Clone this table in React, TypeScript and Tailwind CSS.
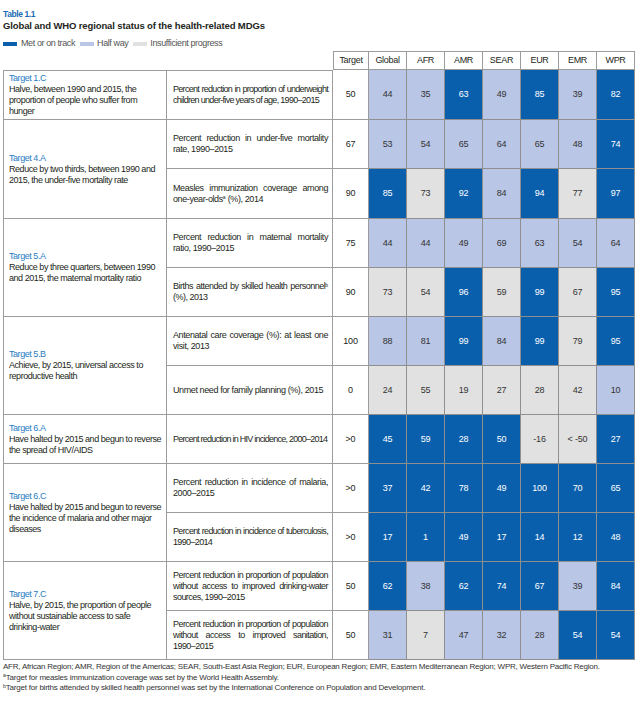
import React from 'react';

type Tone = 'D' | 'L' | 'G';

type Row = { lines: React.ReactNode[]; track: string; target: string; values: [string, Tone][] };
type Group = { code: string; lines: string[]; rows: Row[] };

const sup = (s: string) => <sup className="text-[5px] tracking-normal">{s}</sup>;

const groups: Group[] = [
  {
    code: 'Target 1.C',
    lines: ['Halve, between 1990 and 2015, the', 'proportion of people who suffer from', 'hunger'],
    rows: [
      {
        lines: ['Percent reduction in proportion of underweight', 'children under-five years of age, 1990–2015'],
        track: 'tracking-[-0.7px]',
        target: '50',
        values: [['44', 'L'], ['35', 'L'], ['63', 'D'], ['49', 'L'], ['85', 'D'], ['39', 'L'], ['82', 'D']],
      },
    ],
  },
  {
    code: 'Target 4.A',
    lines: ['Reduce by two thirds, between 1990 and', '2015, the under-five mortality rate'],
    rows: [
      {
        lines: ['Percent reduction in under-five mortality', 'rate, 1990–2015'],
        track: 'tracking-[-0.4px]',
        target: '67',
        values: [['53', 'L'], ['54', 'L'], ['65', 'L'], ['64', 'L'], ['65', 'L'], ['48', 'L'], ['74', 'D']],
      },
      {
        lines: ['Measles immunization coverage among', <>one-year-olds{sup('a')} (%), 2014</>],
        track: 'tracking-[-0.4px]',
        target: '90',
        values: [['85', 'D'], ['73', 'G'], ['92', 'D'], ['84', 'L'], ['94', 'D'], ['77', 'G'], ['97', 'D']],
      },
    ],
  },
  {
    code: 'Target 5.A',
    lines: ['Reduce by three quarters, between 1990', 'and 2015, the maternal mortality ratio'],
    rows: [
      {
        lines: ['Percent reduction in maternal mortality', 'ratio, 1990–2015'],
        track: 'tracking-[-0.4px]',
        target: '75',
        values: [['44', 'L'], ['44', 'L'], ['49', 'L'], ['69', 'L'], ['63', 'L'], ['54', 'L'], ['64', 'L']],
      },
      {
        lines: [<>Births attended by skilled health personnel{sup('b')}</>, '(%), 2013'],
        track: 'tracking-[-0.5px]',
        target: '90',
        values: [['73', 'G'], ['54', 'G'], ['96', 'D'], ['59', 'G'], ['99', 'D'], ['67', 'G'], ['95', 'D']],
      },
    ],
  },
  {
    code: 'Target 5.B',
    lines: ['Achieve, by 2015, universal access to', 'reproductive health'],
    rows: [
      {
        lines: ['Antenatal care coverage (%): at least one', 'visit, 2013'],
        track: 'tracking-[-0.4px]',
        target: '100',
        values: [['88', 'L'], ['81', 'L'], ['99', 'D'], ['84', 'L'], ['99', 'D'], ['79', 'G'], ['95', 'D']],
      },
      {
        lines: ['Unmet need for family planning (%), 2015'],
        track: 'tracking-[-0.4px]',
        target: '0',
        values: [['24', 'G'], ['55', 'G'], ['19', 'G'], ['27', 'G'], ['28', 'G'], ['42', 'G'], ['10', 'L']],
      },
    ],
  },
  {
    code: 'Target 6.A',
    lines: ['Have halted by 2015 and begun to reverse', 'the spread of HIV/AIDS'],
    rows: [
      {
        lines: ['Percent reduction in HIV incidence, 2000–2014'],
        track: 'tracking-[-0.75px]',
        target: '>0',
        values: [['45', 'D'], ['59', 'D'], ['28', 'D'], ['50', 'D'], ['-16', 'G'], ['< -50', 'G'], ['27', 'D']],
      },
    ],
  },
  {
    code: 'Target 6.C',
    lines: ['Have halted by 2015 and begun to reverse', 'the incidence of malaria and other major', 'diseases'],
    rows: [
      {
        lines: ['Percent reduction in incidence of malaria,', '2000–2015'],
        track: 'tracking-[-0.4px]',
        target: '>0',
        values: [['37', 'D'], ['42', 'D'], ['78', 'D'], ['49', 'D'], ['100', 'D'], ['70', 'D'], ['65', 'D']],
      },
      {
        lines: ['Percent reduction in incidence of tuberculosis,', '1990–2014'],
        track: 'tracking-[-0.65px]',
        target: '>0',
        values: [['17', 'D'], ['1', 'D'], ['49', 'D'], ['17', 'D'], ['14', 'D'], ['12', 'D'], ['48', 'D']],
      },
    ],
  },
  {
    code: 'Target 7.C',
    lines: ['Halve, by 2015, the proportion of people', 'without sustainable access to safe', 'drinking-water'],
    rows: [
      {
        lines: ['Percent reduction in proportion of population', 'without access to improved drinking-water', 'sources, 1990–2015'],
        track: 'tracking-[-0.55px]',
        target: '50',
        values: [['62', 'D'], ['38', 'L'], ['62', 'D'], ['74', 'D'], ['67', 'D'], ['39', 'L'], ['84', 'D']],
      },
      {
        lines: ['Percent reduction in proportion of population', 'without access to improved sanitation,', '1990–2015'],
        track: 'tracking-[-0.55px]',
        target: '50',
        values: [['31', 'L'], ['7', 'G'], ['47', 'L'], ['32', 'L'], ['28', 'L'], ['54', 'D'], ['54', 'D']],
      },
    ],
  },
];

const heads = ['Target', 'Global', 'AFR', 'AMR', 'SEAR', 'EUR', 'EMR', 'WPR'];

const toneClass: Record<Tone, string> = {
  D: 'bg-[#0a5fad] text-white',
  L: 'bg-[#b9c6e6] text-[#333]',
  G: 'bg-[#e1e1e1] text-[#333]',
};

export default function App() {
  let first = true;
  return (
    <div
      className="w-[640px] h-[702px] bg-white px-[3px] pt-[9px] text-[#231f20] overflow-hidden"
      style={{ fontFamily: '"Liberation Sans", Arial, sans-serif' }}
    >
      <div className="text-[8.5px] leading-[11px] font-bold tracking-[-0.4px] text-[#1b6db4]">Table 1.1</div>
      <div className="text-[9.5px] leading-[11px] font-bold tracking-[-0.12px]">
        Global and WHO regional status of the health-related MDGs
      </div>

      <div className="flex items-center h-[12px] mt-[7px] text-[9px] tracking-[-0.4px] text-[#555]">
        <span className="w-[14px] h-[4px] bg-[#0a5fad] mr-[4px]" />
        <span>Met or on track</span>
        <span className="w-[14px] h-[4px] bg-[#b9c6e6] ml-[5px] mr-[3px]" />
        <span>Half way</span>
        <span className="w-[14px] h-[4px] bg-[#e1e1e1] ml-[5px] mr-[3px]" />
        <span>Insufficient progress</span>
      </div>

      <div className="grid grid-cols-[164px_166px_36px_repeat(7,38px)] grid-rows-[19px_50px_49px_50px_49px_49px_49px_49px_49px_49px_49px_49px_49px] text-[9px] leading-[11px] mt-[1px]">
        <div />
        <div />
        {heads.map((h, i) => (
          <div
            key={h}
            className={`flex items-center justify-center tracking-[-0.3px] border-t border-r border-b border-[#9c9c9c] ${i === 0 ? 'border-l' : ''}`}
          >
            {h}
          </div>
        ))}

        {groups.map((g) => {
          const top = first;
          first = false;
          return (
            <React.Fragment key={g.code}>
              <div
                className={`flex flex-col justify-center pl-[5px] pr-[3px] tracking-[-0.45px] border-l border-r border-b border-[#9c9c9c] ${top ? 'border-t' : ''} ${g.rows.length === 2 ? 'row-span-2' : ''}`}
              >
                <span className="text-[#2a7cc2] whitespace-nowrap">{g.code}</span>
                {g.lines.map((l) => (
                  <span key={l} className="whitespace-nowrap">
                    {l}
                  </span>
                ))}
              </div>
              {g.rows.map((r, ri) => (
                <React.Fragment key={ri}>
                  <div
                    className={`flex flex-col justify-center pl-[6px] pr-[4px] border-r border-b border-[#9c9c9c] ${r.track} ${top && ri === 0 ? 'border-t' : ''}`}
                  >
                    {r.lines.map((l, li) => (
                      <div
                        key={li}
                        className={li < r.lines.length - 1 ? 'text-justify [text-align-last:justify]' : ''}
                      >
                        {l}
                      </div>
                    ))}
                  </div>
                  <div className="flex items-center justify-center tracking-[-0.2px] border-r border-b border-[#9c9c9c]">
                    {r.target}
                  </div>
                  {r.values.map(([v, t], vi) => (
                    <div
                      key={vi}
                      className={`flex items-center justify-center tracking-[-0.2px] border-r border-b border-[#8f8f8f] ${toneClass[t]}`}
                    >
                      {v}
                    </div>
                  ))}
                </React.Fragment>
              ))}
            </React.Fragment>
          );
        })}
      </div>

      <div className="mt-[2px] text-[8px] leading-[10.5px] tracking-[-0.22px] text-[#333]">
        <div className="whitespace-nowrap">
          AFR, African Region; AMR, Region of the Americas; SEAR, South-East Asia Region; EUR, European Region; EMR, Eastern
          Mediterranean Region; WPR, Western Pacific Region.
        </div>
        <div>
          {sup('a')}Target for measles immunization coverage was set by the World Health Assembly.
        </div>
        <div>
          {sup('b')}Target for births attended by skilled health personnel was set by the International Conference on
          Population and Development.
        </div>
      </div>
    </div>
  );
}
